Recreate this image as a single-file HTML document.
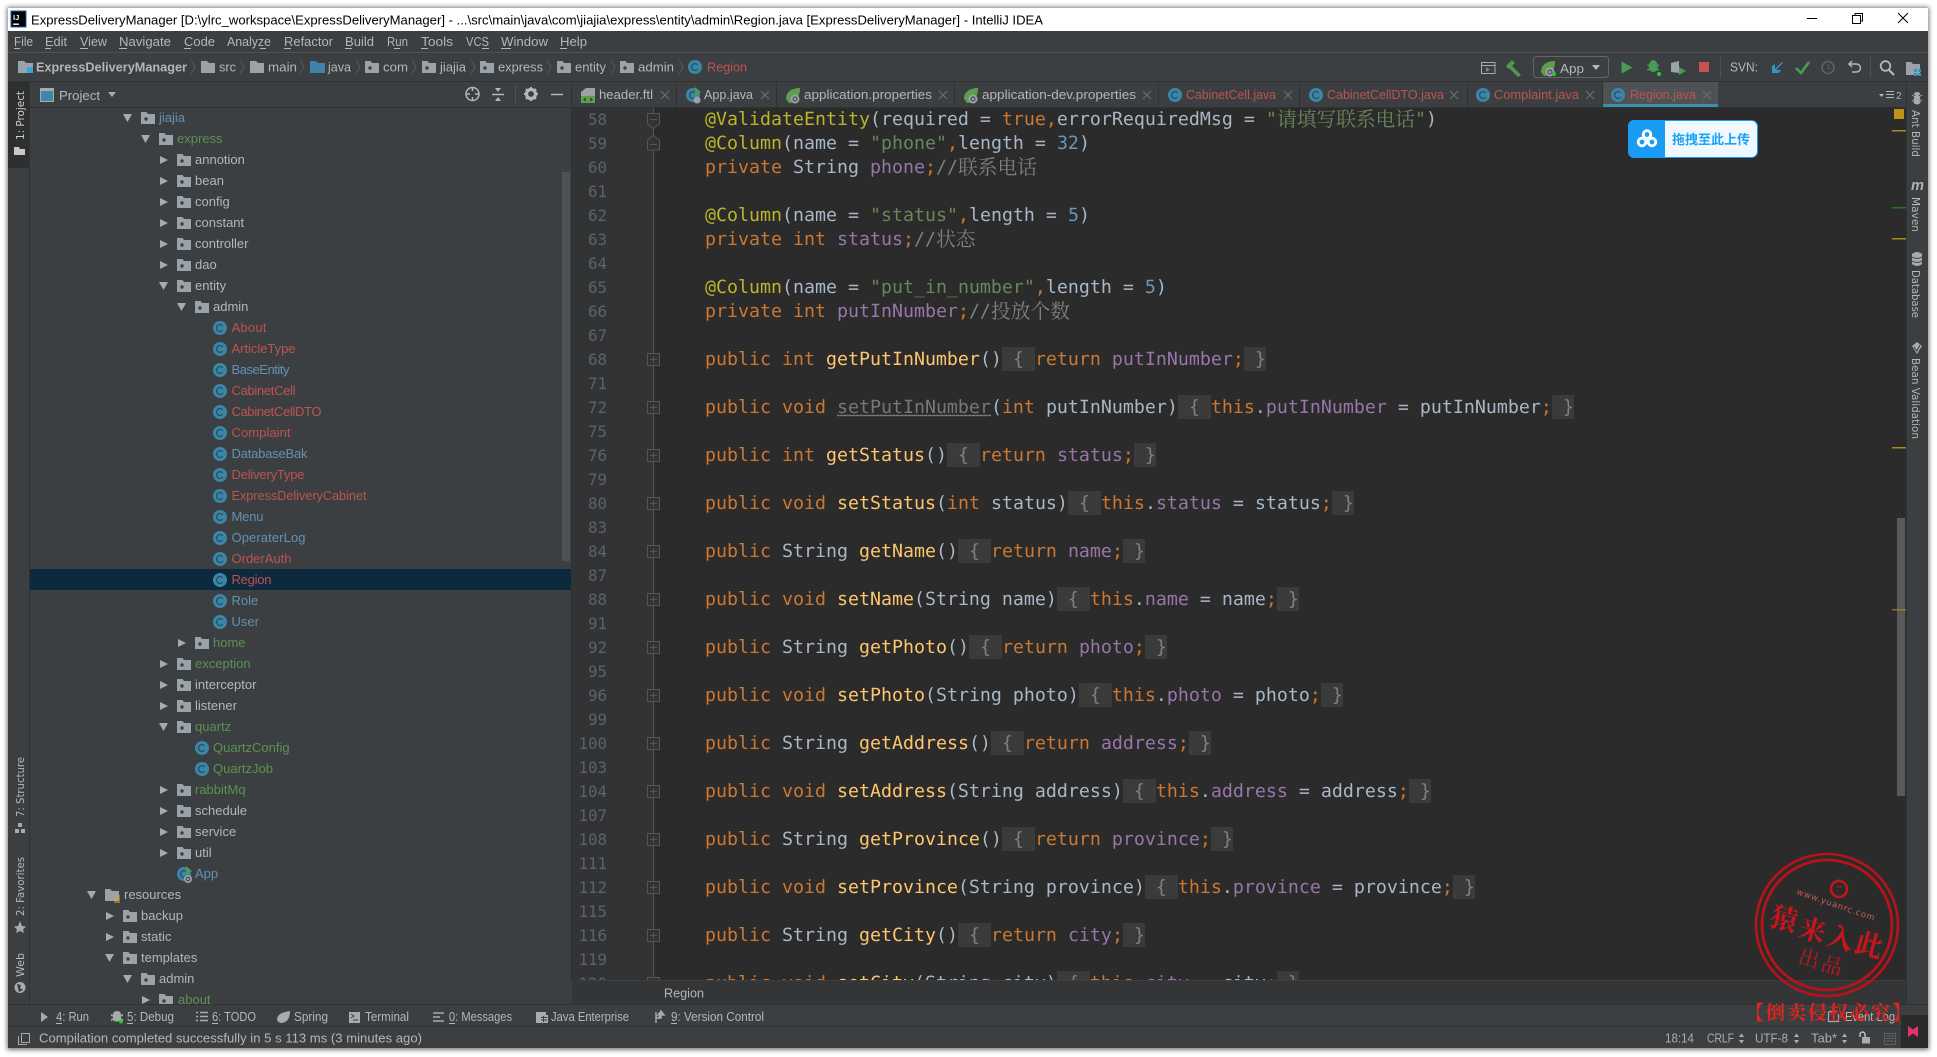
<!DOCTYPE html>
<html><head><meta charset="utf-8"><title>IntelliJ IDEA</title>
<style>
html,body{margin:0;padding:0;background:#fff;width:1937px;height:1057px;overflow:hidden}
svg{display:block}
text{font-family:"Liberation Sans","Noto Sans CJK SC",sans-serif;white-space:pre}
.t{font-size:13px;fill:#b4b6b8}
.u{font-size:12.5px;fill:#b4b6b8}
.b{fill:#6391b3}.r{fill:#bd5450}.g{fill:#5c9150}
.v{font-family:"DejaVu Sans",sans-serif;font-size:10.5px;fill:#b4b6b8}
.c{font-family:"DejaVu Sans Mono",monospace;font-size:18.27px;fill:#a9b7c6;text-rendering:geometricPrecision}
.n{font-family:"DejaVu Sans Mono",monospace;font-size:15.8px;fill:#606366;text-anchor:end}
.k{fill:#cc7832}.s{fill:#6a8759}.d{fill:#6897bb}.a{fill:#bbb529}.f{fill:#9876aa}.m{fill:#ffc66d}.h{fill:#808080}.x{fill:#787878}
.z{font-family:"Noto Serif CJK SC",serif;font-size:19.75px}
</style></head><body>
<svg width="1937" height="1057" viewBox="0 0 1937 1057" xmlns="http://www.w3.org/2000/svg">
<defs>
<filter id="sh" x="-2%" y="-2%" width="104%" height="104%"><feGaussianBlur stdDeviation="2.5"/></filter>
<g id="o"><path d="M0,-4H9L4.5,4Z" fill="#a8abad"/></g>
<g id="p"><path d="M0,-4L8,0L0,4Z" fill="#a8abad"/></g>
<g id="f"><path d="M0,-6H5.5L7,-4H14V6H0Z" fill="#9aa3a9"/><circle cx="5" cy="1" r="1.7" fill="#3c3f41"/></g>
<g id="k"><circle cx="7" cy="0" r="7" fill="#3b86a6"/><path d="M9.6,-2.2A3.4,3.4 0 1 0 9.6,2.2" fill="none" stroke="#2a4f62" stroke-width="1.3"/></g>
<g id="sp"><path d="M0,3C0,-5 7,-8 14,-8C14,-1 11,7 3,7Z" fill="#5f9e4e"/><circle cx="9" cy="3" r="4.5" fill="#9aa3a9"/><circle cx="9" cy="3" r="2" fill="none" stroke="#3c3f41"/></g>
<g id="x"><path d="M0,0L8,8M8,0L0,8" stroke="#6a6d6f" stroke-width="1.2" fill="none"/></g>
<g id="ch"><path d="M0,-7L4,0L0,7" stroke="#55585a" fill="none"/></g>
<g id="pl"><rect x="647.5" y="-5.5" width="12" height="12" fill="#313335" stroke="#555"/><path d="M650,0.5H657M653.5,-3V4" stroke="#555"/></g>
<pattern id="w" x="837" y="414" width="4" height="3" patternUnits="userSpaceOnUse"><path d="M0,2L1,1L3,2L4,1" stroke="#808080" fill="none"/></pattern>
<clipPath id="tc"><rect x="30" y="108" width="532" height="896"/></clipPath>
<clipPath id="ec"><rect x="572" y="107" width="1334" height="873"/></clipPath>
</defs>

<rect width="1937" height="1057" fill="#fff"/>
<rect x="7" y="7" width="1922" height="1043" fill="#777" filter="url(#sh)"/>
<rect x="8" y="8" width="1920" height="1040" fill="#3c3f41"/>

<!-- Title bar -->
<rect x="8" y="8" width="1920" height="23" fill="#fff"/>
<rect x="11" y="11" width="15" height="16" fill="#000" stroke="#1f5fae" stroke-width="1"/>
<text x="13" y="20" style="font-size:7.5px;font-weight:bold;fill:#fff">IJ</text>
<rect x="13" y="23.5" width="6" height="1.4" fill="#fff"/>
<text x="31" y="24.5" textLength="1012" lengthAdjust="spacingAndGlyphs" style="font-size:13px;fill:#000">ExpressDeliveryManager [D:\ylrc_workspace\ExpressDeliveryManager] - ...\src\main\java\com\jiajia\express\entity\admin\Region.java [ExpressDeliveryManager] - IntelliJ IDEA</text>
<path d="M1807,18.5H1817" stroke="#000"/>
<path d="M1852.5,15.5H1860.5V23.5H1852.5ZM1855,15.5V13.5H1862.5V21H1860.5" fill="none" stroke="#000"/>
<path d="M1898,13L1908,23M1908,13L1898,23" stroke="#000"/>

<!-- Menu -->
<rect x="8" y="31" width="1920" height="21" fill="#3c3f41"/>
<rect x="8" y="52" width="1920" height="1" fill="#515151"/>
<g>
<text class="t" x="14" y="46" textLength="19" lengthAdjust="spacingAndGlyphs">File</text>
<text class="t" x="45" y="46" textLength="22" lengthAdjust="spacingAndGlyphs">Edit</text>
<text class="t" x="80" y="46" textLength="27" lengthAdjust="spacingAndGlyphs">View</text>
<text class="t" x="119" y="46" textLength="52" lengthAdjust="spacingAndGlyphs">Navigate</text>
<text class="t" x="184" y="46" textLength="31" lengthAdjust="spacingAndGlyphs">Code</text>
<text class="t" x="227" y="46" textLength="44" lengthAdjust="spacingAndGlyphs">Analyze</text>
<text class="t" x="284" y="46" textLength="49" lengthAdjust="spacingAndGlyphs">Refactor</text>
<text class="t" x="345" y="46" textLength="29" lengthAdjust="spacingAndGlyphs">Build</text>
<text class="t" x="387" y="46" textLength="21" lengthAdjust="spacingAndGlyphs">Run</text>
<text class="t" x="421" y="46" textLength="32" lengthAdjust="spacingAndGlyphs">Tools</text>
<text class="t" x="466" y="46" textLength="23" lengthAdjust="spacingAndGlyphs">VCS</text>
<text class="t" x="501" y="46" textLength="47" lengthAdjust="spacingAndGlyphs">Window</text>
<text class="t" x="560" y="46" textLength="27" lengthAdjust="spacingAndGlyphs">Help</text>
</g>
<path d="M14,48.500h6M45,48.500h6M80,48.500h8M119,48.500h8M184,48.500h7M260,48.500h6M284,48.500h7M345,48.500h7M394,48.500h6M421,48.500h7M482,48.500h7M501,48.500h10M560,48.500h7" stroke="#b4b6b8"/>

<!-- Nav bar -->
<rect x="8" y="53" width="1920" height="28" fill="#3c3f41"/>
<rect x="8" y="81" width="1920" height="1" fill="#323232"/>
<path d="M18,61H24L26,63H33V73H18Z" fill="#9aa3a9"/><rect x="27" y="67" width="6" height="6" fill="#3aa3d8"/>
<text x="36" y="71.5" textLength="151" lengthAdjust="spacingAndGlyphs" style="font-size:13px;font-weight:bold;fill:#b4b6b8">ExpressDeliveryManager</text>
<use href="#ch" x="191" y="67"/>
<path d="M201,61H207L209,63H215V73H201Z" fill="#9aa3a9"/>
<text class="t" x="219" y="71.5" textLength="17" lengthAdjust="spacingAndGlyphs">src</text>
<use href="#ch" x="240" y="67"/>
<path d="M250,61H256L258,63H264V73H250Z" fill="#9aa3a9"/>
<text class="t" x="268" y="71.5" textLength="29" lengthAdjust="spacingAndGlyphs">main</text>
<use href="#ch" x="300" y="67"/>
<path d="M310,61H316L318,63H325V73H310Z" fill="#3f84a8"/>
<text class="t" x="328" y="71.5" textLength="23" lengthAdjust="spacingAndGlyphs">java</text>
<use href="#ch" x="356" y="67"/>
<use href="#f" x="365" y="67"/>
<text class="t" x="383" y="71.5" textLength="25" lengthAdjust="spacingAndGlyphs">com</text>
<use href="#ch" x="412" y="67"/>
<use href="#f" x="422" y="67"/>
<text class="t" x="440" y="71.5" textLength="26" lengthAdjust="spacingAndGlyphs">jiajia</text>
<use href="#ch" x="471" y="67"/>
<use href="#f" x="480" y="67"/>
<text class="t" x="498" y="71.5" textLength="45" lengthAdjust="spacingAndGlyphs">express</text>
<use href="#ch" x="547" y="67"/>
<use href="#f" x="557" y="67"/>
<text class="t" x="575" y="71.5" textLength="31" lengthAdjust="spacingAndGlyphs">entity</text>
<use href="#ch" x="611" y="67"/>
<use href="#f" x="620" y="67"/>
<text class="t" x="638" y="71.5" textLength="36" lengthAdjust="spacingAndGlyphs">admin</text>
<use href="#ch" x="679" y="67"/>
<use href="#k" x="688" y="67"/>
<text class="t r" x="707" y="71.5" textLength="40" lengthAdjust="spacingAndGlyphs">Region</text>

<!-- toolbar right -->
<path d="M1481.5,62.5H1495V73.5H1481.5ZM1481.5,65.5H1495" fill="none" stroke="#a8abad"/><path d="M1486,67V72L1490,69.5Z" fill="#5a9e58"/>
<path d="M1506,66L1512,60L1515,63L1512,66L1521,75L1518,77L1509,68L1508,69Z" fill="#4e9a4e"/>
<rect x="1533.5" y="56.5" width="75" height="21" rx="3" fill="none" stroke="#646464"/>
<use href="#sp" x="1541" y="69"/><circle cx="1554" cy="74" r="2" fill="#2ec82e"/>
<text class="t" x="1560" y="73" textLength="24" lengthAdjust="spacingAndGlyphs">App</text>
<path d="M1592,65H1600L1596,70Z" fill="#b4b6b8"/>
<path d="M1621.5,61.5L1632.5,67.5L1621.5,73.5Z" fill="#499c54"/>
<path d="M1652.5,60c3,0 5,3 5,5l1.500,-1v2l-1.500,.5v2l1.500,.5v2l-2,-1c-1,2.500 -6,2.500 -7.500,0l-2,1v-2l1.500,-.5v-2l-1.500,-.5v-2l1.500,1c0,-2 2,-5 5,-5z" fill="#499c54"/><circle cx="1659" cy="74" r="2" fill="#2ec82e"/>
<path d="M1671,63l8,-2v12l-8,-1z" fill="#9aa3a9"/><path d="M1679,67L1686,71L1679,75Z" fill="#499c54"/>
<rect x="1699" y="62" width="10" height="10" fill="#c75450"/>
<rect x="1720" y="57" width="1" height="21" fill="#515151"/>
<text class="t" x="1730" y="71.5" textLength="28" lengthAdjust="spacingAndGlyphs">SVN:</text>
<path d="M1782,62L1775,69V64L1772,66V73H1779L1781,70H1776L1783,63Z" fill="#3592c4"/>
<path d="M1796,68L1801,73L1809,62" fill="none" stroke="#499c54" stroke-width="2.600"/>
<circle cx="1828" cy="67.500" r="6" fill="none" stroke="#5d6062" stroke-width="1.600"/><path d="M1828,64V68L1831,69" stroke="#5d6062" fill="none"/>
<path d="M1852,61L1849,64L1852,67M1849,64H1856C1862,64 1862,72 1856,72H1852" fill="none" stroke="#b4b6b8" stroke-width="1.500"/>
<rect x="1870" y="57" width="1" height="21" fill="#515151"/>
<circle cx="1885.500" cy="66" r="4.800" fill="none" stroke="#b4b6b8" stroke-width="1.800"/><path d="M1889,70L1894,75" stroke="#b4b6b8" stroke-width="2.200"/>
<path d="M1906,62H1911L1913,64H1920V75H1906Z" fill="#9aa3a9"/><rect x="1914" y="69" width="3" height="3" fill="#3592c4"/><rect x="1918" y="69" width="3" height="3" fill="#3592c4"/><rect x="1914" y="73" width="3" height="3" fill="#3592c4"/><rect x="1918" y="73" width="3" height="3" fill="#3592c4"/>

<!-- left stripe -->
<rect x="29" y="82" width="1" height="922" fill="#323232"/>
<rect x="8" y="82" width="21" height="86" fill="#2d2f30"/>
<text class="v" transform="translate(24,140) rotate(-90)" textLength="49" lengthAdjust="spacingAndGlyphs" style="fill:#d0d0d0">1: Project</text>
<path d="M14,147H19L20,149H25V155H14Z" fill="#c8c8c8"/>
<text class="v" transform="translate(24,817) rotate(-90)" textLength="60" lengthAdjust="spacingAndGlyphs">7: Structure</text>
<path d="M15,829h4v4h-4zM21,829h4v4h-4zM18,823h4v4h-4z" fill="#a8abad"/>
<text class="v" transform="translate(24,916) rotate(-90)" textLength="59" lengthAdjust="spacingAndGlyphs">2: Favorites</text>
<path d="M20,921L22,926L26,926.500L23,929.500L24,933L20,931L16,933L17,929.500L14,926.500L18,926Z" fill="#a8abad"/>
<text class="v" transform="translate(24,977) rotate(-90)" textLength="24" lengthAdjust="spacingAndGlyphs">Web</text>
<circle cx="20" cy="987.500" r="5.500" fill="#a8abad"/><path d="M17,984L21,985L20,988L23,990L19,992L18,988Z" fill="#3c3f41"/>

<!-- project header -->
<rect x="30" y="107" width="542" height="1" fill="#323232"/>
<rect x="40.500" y="88.500" width="13" height="13" fill="#3d87a8" stroke="#a8abad"/>
<rect x="41" y="89" width="12" height="2" fill="#a8abad"/>
<text class="t" x="59" y="100" textLength="41" lengthAdjust="spacingAndGlyphs">Project</text>
<path d="M108,92H116L112,97Z" fill="#a8abad"/>
<circle cx="472.500" cy="94" r="6.500" fill="none" stroke="#b4b7b9" stroke-width="1.500"/><path d="M472.500,87V91M472.500,97V101M466,94H470M475,94H479" stroke="#b4b7b9" stroke-width="1.500"/>
<path d="M492,94.500H504" stroke="#b4b7b9" stroke-width="1.500"/><path d="M495,88H501L498,92ZM495,101H501L498,97Z" fill="#b4b7b9"/>
<rect x="515" y="85" width="1" height="19" fill="#515151"/>
<circle cx="531" cy="94" r="4.500" fill="none" stroke="#b4b7b9" stroke-width="3.200"/><path d="M531,87V89M531,99V101M524,94H526M536,94H538M526,89L527.500,90.500M534.500,97.500L536,99M536,89L534.500,90.500M527.500,97.500L526,99" stroke="#b4b7b9" stroke-width="2"/>
<path d="M551,94.500H563" stroke="#b4b7b9" stroke-width="1.500"/>

<!-- Tree -->
<rect x="30" y="569" width="541" height="21" fill="#0d293e"/>
<g clip-path="url(#tc)">
<use href="#o" x="123" y="118"/><use href="#f" x="141" y="118"/><text class="t b" x="159" y="122">jiajia</text>
<use href="#o" x="141" y="139"/><use href="#f" x="159" y="139"/><text class="t g" x="177" y="143">express</text>
<use href="#p" x="160" y="160"/><use href="#f" x="177" y="160"/><text class="t" x="195" y="164">annotion</text>
<use href="#p" x="160" y="181"/><use href="#f" x="177" y="181"/><text class="t" x="195" y="185">bean</text>
<use href="#p" x="160" y="202"/><use href="#f" x="177" y="202"/><text class="t" x="195" y="206">config</text>
<use href="#p" x="160" y="223"/><use href="#f" x="177" y="223"/><text class="t" x="195" y="227">constant</text>
<use href="#p" x="160" y="244"/><use href="#f" x="177" y="244"/><text class="t" x="195" y="248">controller</text>
<use href="#p" x="160" y="265"/><use href="#f" x="177" y="265"/><text class="t" x="195" y="269">dao</text>
<use href="#o" x="159" y="286"/><use href="#f" x="177" y="286"/><text class="t" x="195" y="290">entity</text>
<use href="#o" x="177" y="307"/><use href="#f" x="195" y="307"/><text class="t" x="213" y="311">admin</text>
<use href="#k" x="213" y="328"/><text class="t r" x="231.500" y="332" textLength="35">About</text>
<use href="#k" x="213" y="349"/><text class="t r" x="231.500" y="353" textLength="64">ArticleType</text>
<use href="#k" x="213" y="370"/><text class="t b" x="231.500" y="374" textLength="58">BaseEntity</text>
<use href="#k" x="213" y="391"/><text class="t r" x="231.500" y="395" textLength="64">CabinetCell</text>
<use href="#k" x="213" y="412"/><text class="t r" x="231.500" y="416" textLength="90">CabinetCellDTO</text>
<use href="#k" x="213" y="433"/><text class="t r" x="231.500" y="437" textLength="59">Complaint</text>
<use href="#k" x="213" y="454"/><text class="t b" x="231.500" y="458" textLength="76">DatabaseBak</text>
<use href="#k" x="213" y="475"/><text class="t r" x="231.500" y="479" textLength="73">DeliveryType</text>
<use href="#k" x="213" y="496"/><text class="t r" x="231.500" y="500" textLength="135" lengthAdjust="spacingAndGlyphs">ExpressDeliveryCabinet</text>
<use href="#k" x="213" y="517"/><text class="t b" x="231.500" y="521" textLength="32">Menu</text>
<use href="#k" x="213" y="538"/><text class="t b" x="231.500" y="542" textLength="74">OperaterLog</text>
<use href="#k" x="213" y="559"/><text class="t r" x="231.500" y="563" textLength="60">OrderAuth</text>
<use href="#k" x="213" y="580"/><text class="t r" x="231.500" y="584" textLength="40">Region</text>
<use href="#k" x="213" y="601"/><text class="t b" x="231.500" y="605">Role</text>
<use href="#k" x="213" y="622"/><text class="t b" x="231.500" y="626">User</text>
<use href="#p" x="178" y="643"/><use href="#f" x="195" y="643"/><text class="t g" x="213" y="647">home</text>
<use href="#p" x="160" y="664"/><use href="#f" x="177" y="664"/><text class="t g" x="195" y="668">exception</text>
<use href="#p" x="160" y="685"/><use href="#f" x="177" y="685"/><text class="t" x="195" y="689">interceptor</text>
<use href="#p" x="160" y="706"/><use href="#f" x="177" y="706"/><text class="t" x="195" y="710">listener</text>
<use href="#o" x="159" y="727"/><use href="#f" x="177" y="727"/><text class="t g" x="195" y="731">quartz</text>
<use href="#k" x="195" y="748"/><text class="t g" x="213" y="752">QuartzConfig</text>
<use href="#k" x="195" y="769"/><text class="t g" x="213" y="773">QuartzJob</text>
<use href="#p" x="160" y="790"/><use href="#f" x="177" y="790"/><text class="t g" x="195" y="794">rabbitMq</text>
<use href="#p" x="160" y="811"/><use href="#f" x="177" y="811"/><text class="t" x="195" y="815">schedule</text>
<use href="#p" x="160" y="832"/><use href="#f" x="177" y="832"/><text class="t" x="195" y="836">service</text>
<use href="#p" x="160" y="853"/><use href="#f" x="177" y="853"/><text class="t" x="195" y="857">util</text>
<use href="#k" x="177" y="874"/><path d="M186,866L192,871L186,875Z" fill="#499c54"/><circle cx="188" cy="879" r="4" fill="#9aa3a9"/><circle cx="188" cy="879" r="1.800" fill="none" stroke="#3c3f41"/><text class="t b" x="195" y="878">App</text>
<use href="#o" x="87" y="895"/><path d="M105,889H110L112,891H119V901H105Z" fill="#9aa3a9"/><path d="M114,896h6M114,898h6M114,900h6M114,902h6" stroke="#d9a343"/><text class="t" x="124" y="899">resources</text>
<use href="#p" x="106" y="916"/><use href="#f" x="123" y="916"/><text class="t" x="141" y="920">backup</text>
<use href="#p" x="106" y="937"/><use href="#f" x="123" y="937"/><text class="t" x="141" y="941">static</text>
<use href="#o" x="105" y="958"/><use href="#f" x="123" y="958"/><text class="t" x="141" y="962">templates</text>
<use href="#o" x="123" y="979"/><use href="#f" x="141" y="979"/><text class="t" x="159" y="983">admin</text>
<use href="#p" x="142" y="1000"/><use href="#f" x="159" y="1000"/><text class="t g" x="178" y="1004">about</text>
</g>
<rect x="562" y="172" width="8" height="389" fill="#4f5254"/>

<!-- Tabs -->
<rect x="571" y="82" width="1335" height="25" fill="#3c3f41"/>
<rect x="571" y="82" width="1" height="898" fill="#323232"/>
<rect x="1602" y="82" width="116" height="22" fill="#4e5254"/>
<rect x="1602" y="104" width="116" height="3" fill="#3a8fac"/>
<path d="M676.500,82V107M776.500,82V107M954.500,82V107M1158.500,82V107M1299.500,82V107M1467.500,82V107M1602.500,82V107" stroke="#323232"/>
<rect x="572" y="107" width="1334" height="1" fill="#323232"/>

<path d="M586,88H595V96H581V92Z" fill="#9aa3a9"/><rect x="581" y="96" width="14" height="7" fill="#5fa04e"/><path d="M586,98L584,99.500L586,101M590,98L592,99.500L590,101" stroke="#2c2c2c" fill="none"/>
<text class="t" x="599" y="99" textLength="54" lengthAdjust="spacingAndGlyphs">header.ftl</text><use href="#x" x="661" y="91"/>
<use href="#k" x="686" y="95"/><path d="M695,87L701,92L695,96Z" fill="#499c54"/><circle cx="697" cy="100" r="3.500" fill="#9aa3a9"/>
<text class="t" x="704" y="99" textLength="49" lengthAdjust="spacingAndGlyphs">App.java</text><use href="#x" x="761" y="91"/>
<use href="#sp" x="786" y="96"/>
<text class="t" x="804" y="99" textLength="128" lengthAdjust="spacingAndGlyphs">application.properties</text><use href="#x" x="939" y="91"/>
<use href="#sp" x="964" y="96"/>
<text class="t" x="982" y="99" textLength="154" lengthAdjust="spacingAndGlyphs">application-dev.properties</text><use href="#x" x="1143" y="91"/>
<use href="#k" x="1168" y="95"/>
<text class="t r" x="1186" y="99" textLength="90" lengthAdjust="spacingAndGlyphs">CabinetCell.java</text><use href="#x" x="1284" y="91"/>
<use href="#k" x="1309" y="95"/>
<text class="t r" x="1327" y="99" textLength="117" lengthAdjust="spacingAndGlyphs">CabinetCellDTO.java</text><use href="#x" x="1450" y="91"/>
<use href="#k" x="1476" y="95"/>
<text class="t r" x="1494" y="99" textLength="85" lengthAdjust="spacingAndGlyphs">Complaint.java</text><use href="#x" x="1586" y="91"/>
<use href="#k" x="1611" y="95"/>
<text class="t r" x="1630" y="99" textLength="66" lengthAdjust="spacingAndGlyphs">Region.java</text><use href="#x" x="1703" y="91"/>
<path d="M1879,94H1884L1881.500,97Z" fill="#b4b6b8"/><path d="M1886,91.500h8M1886,94.500h8M1886,97.500h8" stroke="#b4b6b8"/><text x="1896" y="99" style="font-size:10px;fill:#b4b6b8">2</text>

<!-- Editor -->
<rect x="572" y="108" width="1334" height="872" fill="#2b2b2b"/>
<rect x="572" y="108" width="81" height="872" fill="#313335"/>
<rect x="653" y="108" width="1" height="872" fill="#555"/>

<g clip-path="url(#ec)">
<!-- fold placeholders -->
<g fill="#3b3b3b">
<rect x="1002" y="347" width="33" height="24"/><rect x="1244" y="347" width="22" height="24"/>
<rect x="1178" y="395" width="33" height="24"/><rect x="1552" y="395" width="22" height="24"/>
<rect x="947" y="443" width="33" height="24"/><rect x="1134" y="443" width="22" height="24"/>
<rect x="1068" y="491" width="33" height="24"/><rect x="1332" y="491" width="22" height="24"/>
<rect x="958" y="539" width="33" height="24"/><rect x="1123" y="539" width="22" height="24"/>
<rect x="1057" y="587" width="33" height="24"/><rect x="1277" y="587" width="22" height="24"/>
<rect x="969" y="635" width="33" height="24"/><rect x="1145" y="635" width="22" height="24"/>
<rect x="1079" y="683" width="33" height="24"/><rect x="1321" y="683" width="22" height="24"/>
<rect x="991" y="731" width="33" height="24"/><rect x="1189" y="731" width="22" height="24"/>
<rect x="1123" y="779" width="33" height="24"/><rect x="1409" y="779" width="22" height="24"/>
<rect x="1002" y="827" width="33" height="24"/><rect x="1211" y="827" width="22" height="24"/>
<rect x="1145" y="875" width="33" height="24"/><rect x="1453" y="875" width="22" height="24"/>
<rect x="958" y="923" width="33" height="24"/><rect x="1123" y="923" width="22" height="24"/>
<rect x="1057" y="971" width="33" height="24"/><rect x="1277" y="971" width="22" height="24"/>
</g>
<rect x="837" y="414" width="154" height="3" fill="url(#w)"/>

<!-- line numbers -->
<g>
<text class="n" x="607" y="125">58</text><text class="n" x="607" y="149">59</text><text class="n" x="607" y="173">60</text><text class="n" x="607" y="197">61</text><text class="n" x="607" y="221">62</text><text class="n" x="607" y="245">63</text><text class="n" x="607" y="269">64</text><text class="n" x="607" y="293">65</text><text class="n" x="607" y="317">66</text><text class="n" x="607" y="341">67</text><text class="n" x="607" y="365">68</text><text class="n" x="607" y="389">71</text><text class="n" x="607" y="413">72</text><text class="n" x="607" y="437">75</text><text class="n" x="607" y="461">76</text><text class="n" x="607" y="485">79</text><text class="n" x="607" y="509">80</text><text class="n" x="607" y="533">83</text><text class="n" x="607" y="557">84</text><text class="n" x="607" y="581">87</text><text class="n" x="607" y="605">88</text><text class="n" x="607" y="629">91</text><text class="n" x="607" y="653">92</text><text class="n" x="607" y="677">95</text><text class="n" x="607" y="701">96</text><text class="n" x="607" y="725">99</text><text class="n" x="607" y="749">100</text><text class="n" x="607" y="773">103</text><text class="n" x="607" y="797">104</text><text class="n" x="607" y="821">107</text><text class="n" x="607" y="845">108</text><text class="n" x="607" y="869">111</text><text class="n" x="607" y="893">112</text><text class="n" x="607" y="917">115</text><text class="n" x="607" y="941">116</text><text class="n" x="607" y="965">119</text><text class="n" x="607" y="989">120</text>
</g>

<!-- fold markers -->
<path d="M647.500,113.500H659.500V124L653.500,128.500L647.500,124Z" fill="#313335" stroke="#555"/><path d="M650,119.500H657" stroke="#555"/>
<path d="M653.500,135.500L659.500,140V150H647.500V140Z" fill="#313335" stroke="#555"/><path d="M650,144.500H657" stroke="#555"/>
<use href="#pl" y="359"/><use href="#pl" y="407"/><use href="#pl" y="455"/><use href="#pl" y="503"/><use href="#pl" y="551"/><use href="#pl" y="599"/><use href="#pl" y="647"/><use href="#pl" y="695"/><use href="#pl" y="743"/><use href="#pl" y="791"/><use href="#pl" y="839"/><use href="#pl" y="887"/><use href="#pl" y="935"/><use href="#pl" y="983"/>

<!-- code -->
<text class="c" x="705" y="125"><tspan class="a">@ValidateEntity</tspan>(required = <tspan class="k">true,</tspan>errorRequiredMsg = <tspan class="s">"</tspan></text>
<text class="z s" x="1277" y="126" textLength="138">请填写联系电话</text>
<text class="c" x="1415" y="125"><tspan class="s">"</tspan>)</text>
<text class="c" x="705" y="149"><tspan class="a">@Column</tspan>(name = <tspan class="s">"phone"</tspan><tspan class="k">,</tspan>length = <tspan class="d">32</tspan>)</text>
<text class="c" x="705" y="173"><tspan class="k">private </tspan>String <tspan class="f">phone</tspan><tspan class="k">;</tspan><tspan class="h">//</tspan></text>
<text class="z h" x="958" y="174" textLength="79">联系电话</text>
<text class="c" x="705" y="221"><tspan class="a">@Column</tspan>(name = <tspan class="s">"status"</tspan><tspan class="k">,</tspan>length = <tspan class="d">5</tspan>)</text>
<text class="c" x="705" y="245"><tspan class="k">private int </tspan><tspan class="f">status</tspan><tspan class="k">;</tspan><tspan class="h">//</tspan></text>
<text class="z h" x="936" y="246" textLength="39.500">状态</text>
<text class="c" x="705" y="293"><tspan class="a">@Column</tspan>(name = <tspan class="s">"put_in_number"</tspan><tspan class="k">,</tspan>length = <tspan class="d">5</tspan>)</text>
<text class="c" x="705" y="317"><tspan class="k">private int </tspan><tspan class="f">putInNumber</tspan><tspan class="k">;</tspan><tspan class="h">//</tspan></text>
<text class="z h" x="991" y="318" textLength="79">投放个数</text>

<text class="c" x="705" y="365"><tspan class="k">public int </tspan><tspan class="m">getPutInNumber</tspan>()<tspan class="h"> { </tspan><tspan class="k">return </tspan><tspan class="f">putInNumber</tspan><tspan class="k">;</tspan><tspan class="h"> }</tspan></text>
<text class="c" x="705" y="413"><tspan class="k">public void </tspan><tspan class="x">setPutInNumber</tspan>(<tspan class="k">int </tspan>putInNumber)<tspan class="h"> { </tspan><tspan class="k">this</tspan>.<tspan class="f">putInNumber</tspan> = putInNumber<tspan class="k">;</tspan><tspan class="h"> }</tspan></text>
<text class="c" x="705" y="461"><tspan class="k">public int </tspan><tspan class="m">getStatus</tspan>()<tspan class="h"> { </tspan><tspan class="k">return </tspan><tspan class="f">status</tspan><tspan class="k">;</tspan><tspan class="h"> }</tspan></text>
<text class="c" x="705" y="509"><tspan class="k">public void </tspan><tspan class="m">setStatus</tspan>(<tspan class="k">int </tspan>status)<tspan class="h"> { </tspan><tspan class="k">this</tspan>.<tspan class="f">status</tspan> = status<tspan class="k">;</tspan><tspan class="h"> }</tspan></text>
<text class="c" x="705" y="557"><tspan class="k">public </tspan>String <tspan class="m">getName</tspan>()<tspan class="h"> { </tspan><tspan class="k">return </tspan><tspan class="f">name</tspan><tspan class="k">;</tspan><tspan class="h"> }</tspan></text>
<text class="c" x="705" y="605"><tspan class="k">public void </tspan><tspan class="m">setName</tspan>(String name)<tspan class="h"> { </tspan><tspan class="k">this</tspan>.<tspan class="f">name</tspan> = name<tspan class="k">;</tspan><tspan class="h"> }</tspan></text>
<text class="c" x="705" y="653"><tspan class="k">public </tspan>String <tspan class="m">getPhoto</tspan>()<tspan class="h"> { </tspan><tspan class="k">return </tspan><tspan class="f">photo</tspan><tspan class="k">;</tspan><tspan class="h"> }</tspan></text>
<text class="c" x="705" y="701"><tspan class="k">public void </tspan><tspan class="m">setPhoto</tspan>(String photo)<tspan class="h"> { </tspan><tspan class="k">this</tspan>.<tspan class="f">photo</tspan> = photo<tspan class="k">;</tspan><tspan class="h"> }</tspan></text>
<text class="c" x="705" y="749"><tspan class="k">public </tspan>String <tspan class="m">getAddress</tspan>()<tspan class="h"> { </tspan><tspan class="k">return </tspan><tspan class="f">address</tspan><tspan class="k">;</tspan><tspan class="h"> }</tspan></text>
<text class="c" x="705" y="797"><tspan class="k">public void </tspan><tspan class="m">setAddress</tspan>(String address)<tspan class="h"> { </tspan><tspan class="k">this</tspan>.<tspan class="f">address</tspan> = address<tspan class="k">;</tspan><tspan class="h"> }</tspan></text>
<text class="c" x="705" y="845"><tspan class="k">public </tspan>String <tspan class="m">getProvince</tspan>()<tspan class="h"> { </tspan><tspan class="k">return </tspan><tspan class="f">province</tspan><tspan class="k">;</tspan><tspan class="h"> }</tspan></text>
<text class="c" x="705" y="893"><tspan class="k">public void </tspan><tspan class="m">setProvince</tspan>(String province)<tspan class="h"> { </tspan><tspan class="k">this</tspan>.<tspan class="f">province</tspan> = province<tspan class="k">;</tspan><tspan class="h"> }</tspan></text>
<text class="c" x="705" y="941"><tspan class="k">public </tspan>String <tspan class="m">getCity</tspan>()<tspan class="h"> { </tspan><tspan class="k">return </tspan><tspan class="f">city</tspan><tspan class="k">;</tspan><tspan class="h"> }</tspan></text>
<text class="c" x="705" y="989"><tspan class="k">public void </tspan><tspan class="m">setCity</tspan>(String city)<tspan class="h"> { </tspan><tspan class="k">this</tspan>.<tspan class="f">city</tspan> = city<tspan class="k">;</tspan><tspan class="h"> }</tspan></text>
</g>

<!-- Editor scroll markers -->
<rect x="1897" y="518" width="8" height="278" fill="#5a5a5a"/>
<rect x="1894" y="109" width="10" height="10" fill="#be9117"/>
<rect x="1892" y="130" width="14" height="1.500" fill="#a68a1c"/>
<rect x="1892" y="207" width="14" height="1.500" fill="#1f7a1f"/>
<rect x="1892" y="238" width="14" height="1.500" fill="#a68a1c"/>
<rect x="1892" y="447" width="14" height="1.500" fill="#a68a1c"/>
<rect x="1892" y="609" width="14" height="1.500" fill="#a68a1c" opacity=".75"/>

<!-- Baidu popup -->
<rect x="1628.500" y="120.500" width="129" height="37" rx="6" fill="#eff8ff" stroke="#1a9cf5"/>
<path d="M1634,120H1665V158H1634A6,6 0 0 1 1628,152V126A6,6 0 0 1 1634,120Z" fill="#1a9cf5"/>
<g fill="none" stroke="#fff" stroke-width="2.800"><circle cx="1647" cy="134.500" r="3.800"/><circle cx="1642" cy="142" r="3.800"/><circle cx="1652" cy="142" r="3.800"/></g>
<text x="1672" y="144" textLength="78" style="font-family:'Noto Sans CJK SC',sans-serif;font-size:13px;font-weight:bold;fill:#1aa3f5">拖拽至此上传</text>

<!-- Right stripe -->
<rect x="1906" y="82" width="22" height="922" fill="#3c3f41"/>
<rect x="1906" y="82" width="1" height="922" fill="#323232"/>
<ellipse cx="1917" cy="94" rx="3" ry="2" fill="#a8abad"/><ellipse cx="1917" cy="98" rx="3" ry="2.500" fill="#a8abad"/><ellipse cx="1917" cy="102" rx="3.500" ry="2.500" fill="#a8abad"/><path d="M1912,95L1922,101M1922,95L1912,101" stroke="#a8abad"/>
<text class="v" transform="translate(1912,110) rotate(90)" textLength="47" lengthAdjust="spacingAndGlyphs">Ant Build</text>
<text transform="translate(1911,190)" textLength="13" lengthAdjust="spacingAndGlyphs" style="font-size:15px;font-weight:bold;font-style:italic;fill:#b0b3b5">m</text>
<text class="v" transform="translate(1912,197) rotate(90)" textLength="35" lengthAdjust="spacingAndGlyphs">Maven</text>
<path d="M1912,254Q1917,250 1922,254V264Q1917,268 1912,264Z" fill="#a8abad"/><path d="M1912,257Q1917,260 1922,257M1912,261Q1917,264 1922,261" stroke="#3c3f41" fill="none"/>
<text class="v" transform="translate(1912,270) rotate(90)" textLength="48" lengthAdjust="spacingAndGlyphs">Database</text>
<path d="M1912,346L1917,342L1922,346L1917,354Z" fill="#a8abad"/><path d="M1914,347L1917,351L1920,345" stroke="#3c3f41" fill="none"/>
<text class="v" transform="translate(1912,358) rotate(90)" textLength="81" lengthAdjust="spacingAndGlyphs">Bean Validation</text>

<!-- Editor breadcrumb -->
<rect x="572" y="980" width="1334" height="24" fill="#333537"/>
<rect x="572" y="980" width="1334" height="1" fill="#3c3f41"/>
<text class="t" x="664" y="997.500" textLength="40" lengthAdjust="spacingAndGlyphs">Region</text>
<rect x="8" y="1004" width="1920" height="1" fill="#2f3132"/>

<!-- Bottom tool stripe -->
<rect x="8" y="1005" width="1920" height="21" fill="#3c3f41"/>
<rect x="8" y="1026" width="1920" height="1" fill="#323232"/>
<path d="M41,1012L48,1017L41,1022Z" fill="#a8abad"/>
<text class="u" x="56" y="1021" textLength="33" lengthAdjust="spacingAndGlyphs">4: Run</text>
<path d="M117,1011c3,0 4,2 4,4l2,-1v2l-2,.5v2l2,.5v2l-2,-1c-1,2 -7,2 -8,0l-2,1v-2l2,-.5v-2l-2,-.5v-2l2,1c0,-2 1,-4 4,-4z" fill="#a8abad"/><circle cx="121" cy="1021.500" r="2" fill="#1fd11f"/>
<text class="u" x="127" y="1021" textLength="47" lengthAdjust="spacingAndGlyphs">5: Debug</text>
<path d="M196,1012.500h2M196,1016.500h2M196,1020.500h2M200,1012.500h8M200,1016.500h8M200,1020.500h8" stroke="#a8abad" stroke-width="1.500"/>
<text class="u" x="212" y="1021" textLength="44" lengthAdjust="spacingAndGlyphs">6: TODO</text>
<path d="M277,1020C277,1014 283,1012 290,1011C290,1017 288,1022 282,1023C280,1023 278,1022 277,1020Z" fill="#a8abad"/>
<text class="u" x="294" y="1021" textLength="34" lengthAdjust="spacingAndGlyphs">Spring</text>
<rect x="349" y="1012" width="11" height="11" fill="#a8abad"/><path d="M351,1014L354,1016L351,1018M353,1020H358" stroke="#3c3f41" fill="none"/>
<text class="u" x="365" y="1021" textLength="44" lengthAdjust="spacingAndGlyphs">Terminal</text>
<path d="M433,1013h11M433,1017h7M433,1021h11" stroke="#a8abad" stroke-width="1.600"/>
<text class="u" x="449" y="1021" textLength="63" lengthAdjust="spacingAndGlyphs">0: Messages</text>
<path d="M536,1012H546V1015H548V1023H536Z" fill="#a8abad"/><path d="M541,1017.500h6M541,1020h6M543.500,1016v6" stroke="#3c3f41" fill="none"/>
<text class="u" x="551" y="1021" textLength="78" lengthAdjust="spacingAndGlyphs">Java Enterprise</text>
<path d="M656,1012V1023M656,1018H661V1015M661,1011L664,1015H658Z" stroke="#a8abad" stroke-width="1.500" fill="#a8abad"/>
<text class="u" x="671" y="1021" textLength="93" lengthAdjust="spacingAndGlyphs">9: Version Control</text>
<path d="M56,1023.500h6M127,1023.500h6M212,1023.500h6M449,1023.500h6M671,1023.500h6" stroke="#b4b6b8"/>

<!-- Status bar -->
<rect x="8" y="1027" width="1920" height="21" fill="#3c3f41"/>
<rect x="21.500" y="1033.500" width="8" height="9" fill="none" stroke="#a8abad"/><path d="M21,1044.500H18.500V1036" stroke="#a8abad" fill="none"/><path d="M18.500,1044.500H27" stroke="#a8abad"/>
<text class="u" x="39" y="1042.500" textLength="383" lengthAdjust="spacingAndGlyphs" style="font-size:13px">Compilation completed successfully in 5 s 113 ms (3 minutes ago)</text>
<text class="u" x="1665" y="1042.500" textLength="29" lengthAdjust="spacingAndGlyphs" style="fill:#a9adb0">18:14</text>
<text class="u" x="1707" y="1042.500" textLength="27" lengthAdjust="spacingAndGlyphs" style="fill:#a9adb0">CRLF</text>
<path d="M1739,1037L1741.500,1033.500L1744,1037ZM1739,1040L1741.500,1043.500L1744,1040Z" fill="#a9adb0"/>
<text class="u" x="1755" y="1042.500" textLength="33" lengthAdjust="spacingAndGlyphs" style="fill:#a9adb0">UTF-8</text>
<path d="M1794,1037L1796.500,1033.500L1799,1037ZM1794,1040L1796.500,1043.500L1799,1040Z" fill="#a9adb0"/>
<text class="u" x="1811" y="1042.500" textLength="26" lengthAdjust="spacingAndGlyphs" style="fill:#a9adb0">Tab*</text>
<path d="M1842,1037L1844.500,1033.500L1847,1037ZM1842,1040L1844.500,1043.500L1847,1040Z" fill="#a9adb0"/>
<rect x="1862" y="1037" width="8" height="6.500" fill="#a8abad"/><path d="M1860,1037V1034.500A2.500,2.500 0 0 1 1865,1034.500V1037" fill="none" stroke="#c8c8c8" stroke-width="1.400"/>
<path d="M1884.500,1033.500H1895.500V1044.500H1884.500ZM1886,1036h8M1886,1038.500h8M1886,1041h8" fill="none" stroke="#5d6062"/>

<!-- Event log -->
<path d="M1836,1011.500H1830A1.500,1.500 0 0 0 1828.500,1013V1021.500H1838.500V1014" fill="none" stroke="#a8abad" stroke-width="1.200"/>
<text class="u" x="1845" y="1021" textLength="50" lengthAdjust="spacingAndGlyphs">Event Log</text>

<!-- stamp -->
<g fill="none" stroke="#b5141b">
<circle cx="1827" cy="925" r="71" stroke-width="2.600"/>
<circle cx="1827" cy="925" r="65" stroke-width="2.800"/>
</g>
<g>
<circle cx="1839" cy="889" r="8" fill="none" stroke="#c4161c" stroke-width="2.500"/>
<path d="M1839,879V882M1836,887h6" stroke="#c4161c" fill="none"/>
<text transform="translate(1796,894) rotate(19)" textLength="82" lengthAdjust="spacing" style="font-family:'DejaVu Sans',sans-serif;font-size:8.500px;fill:#c85a5e">www.yuanrc.com</text>
<text transform="translate(1768,925) rotate(15)" style="font-family:'Noto Serif CJK SC',serif;font-size:28px;font-weight:bold;fill:#c4161c">猿</text>
<text transform="translate(1797,936) rotate(15)" style="font-family:'Noto Serif CJK SC',serif;font-size:27px;font-weight:bold;fill:#c4161c">来</text>
<text transform="translate(1825,944) rotate(15)" style="font-family:'Noto Serif CJK SC',serif;font-size:27px;font-weight:bold;fill:#c4161c">入</text>
<text transform="translate(1853,951) rotate(15)" style="font-family:'Noto Serif CJK SC',serif;font-size:28px;font-weight:bold;fill:#c4161c">此</text>
<text transform="translate(1797,963) rotate(15)" style="font-family:'Noto Serif CJK SC',serif;font-size:21px;fill:#c4161c">出</text>
<text transform="translate(1820,970) rotate(15)" style="font-family:'Noto Serif CJK SC',serif;font-size:21px;fill:#c4161c">品</text>
</g>
<text x="1745" y="1019" textLength="166" lengthAdjust="spacing" style="font-family:'Noto Serif CJK SC',serif;font-size:19px;font-weight:bold;fill:#e3231b">【倒卖侵权必究】</text>

<!-- bottom right bow -->
<rect x="1901" y="1015" width="27" height="33" fill="#2b2b2b"/>
<path d="M1908,1026L1913,1029.500L1918,1026V1037L1913,1033.500L1908,1037Z" fill="#e8326e"/>
</svg>
</body></html>
